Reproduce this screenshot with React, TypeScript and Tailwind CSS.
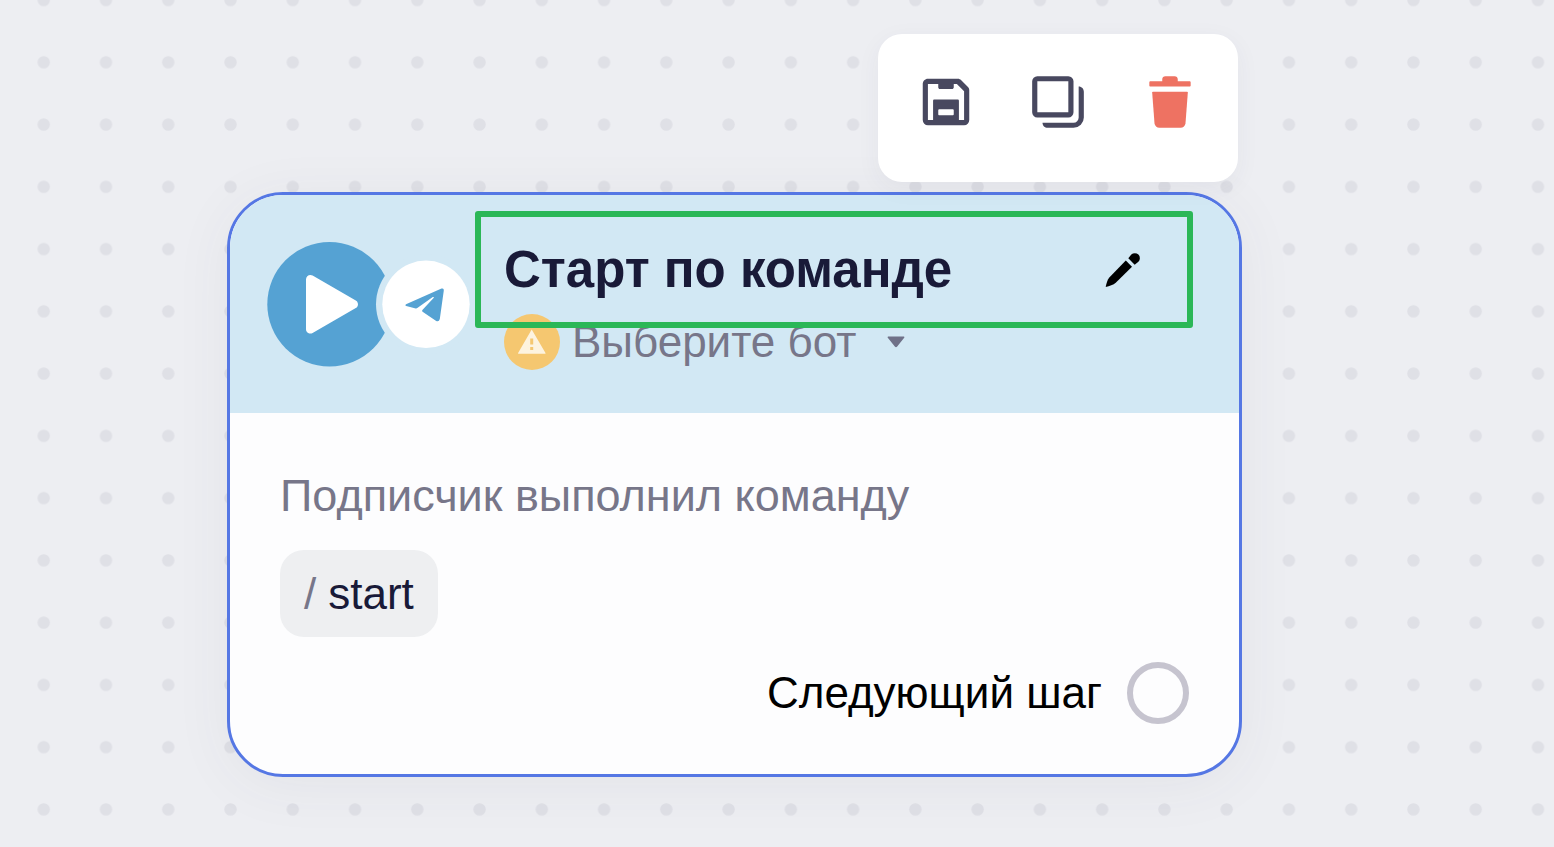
import React from "react";

function DotGrid() {
  return (
    <svg className="absolute inset-0 h-full w-full" aria-hidden="true">
      <defs>
        <pattern id="dots" x="12.6" y="-31.1" width="62.26" height="62.26" patternUnits="userSpaceOnUse">
          <circle cx="31.13" cy="31.13" r="6.2" fill="#dfe0e6" />
        </pattern>
      </defs>
      <rect width="100%" height="100%" fill="url(#dots)" />
    </svg>
  );
}

function SaveIcon() {
  return (
    <svg viewBox="0 0 24 24" className="size-full" fill="#48485f" aria-hidden="true">
      <path
        fillRule="evenodd"
        d="M5 3h11.6c.5 0 .9.2 1.3.6l2.5 2.5c.4.4.6.8.6 1.300V19a2 2 0 0 1-2 2H5a2 2 0 0 1-2-2V5c0-1.100.9-2 2-2zM5 5v14h2v-7.500c0-.3.200-.5.500-.5h9c.3 0 .5.200.5.500V19h2V7.800L16.200 5H15v1.300c0 .4-.300.700-.7.700H9.700c-.4 0-.7-.300-.7-.700V5zM9.400 14.800c-.200 0-.4.200-.4.400v1.500c0 .200.200.4.400.4h5.200c.200 0 .4-.200.4-.4v-1.500c0-.200-.200-.4-.4-.4z"
      />
    </svg>
  );
}

function CopyIcon() {
  return (
    <svg viewBox="0 0 24 24" className="size-full" fill="none" stroke="#48485f" strokeWidth="2" aria-hidden="true">
      <rect x="3" y="3" width="14" height="14" rx="1" />
      <path fill="#48485f" stroke="none" d="M20 6c1.200 0 2 .9 2 2v10a4 4 0 0 1-4 4H8c-1.100 0-2-.8-2-2h12a2 2 0 0 0 2-2z" />
    </svg>
  );
}

function TrashIcon() {
  return (
    <svg viewBox="0 0 24 24" className="size-full" fill="#ee7262" aria-hidden="true">
      <path d="M4.400 4H9v-.8C9 2.500 9.500 2 10.200 2h3.600c.7 0 1.200.5 1.200 1.200V4h4.600c.2 0 .4.200.4.400v1.200c0 .200-.2.400-.4.400H4.400c-.2 0-.4-.200-.4-.400V4.400c0-.200.2-.400.4-.400z" />
      <path d="M5.400 8h13.200c.2 0 .3.100.3.300L18 20.200c-.1 1-.9 1.800-1.900 1.800H7.900c-1 0-1.800-.8-1.900-1.800L5.100 8.300c0-.2.100-.3.300-.3z" />
    </svg>
  );
}

function StartIcon() {
  return (
    <svg viewBox="0 0 203 125" className="h-[125px] w-[203px] shrink-0" aria-hidden="true">
      <circle cx="62.500" cy="62.300" r="62.200" fill="#55a2d3" />
      <path d="M43.400 37.400L86.600 62.300L43.400 87.200Z" fill="#fff" stroke="#fff" strokeWidth="8.800" strokeLinejoin="round" />
      <circle cx="159" cy="62.300" r="50" fill="#d2e8f4" />
      <circle cx="159" cy="62.300" r="43.700" fill="#fff" />
      <path
        d="M139 62.300L174.500 46.600Q177 45.800 176.800 48.400L172.800 77Q172 80.200 169.200 79L155.600 69.700Q154.600 68.800 155.400 67.900L166.800 55.700Q167.200 54.600 165.800 55L151 65.600Q149.600 66.800 147.800 66.300L139.200 64Q137.400 63.200 139 62.300Z"
        fill="#55a2d3"
      />
    </svg>
  );
}

function WarningIcon() {
  return (
    <svg viewBox="0 0 56 56" className="size-14 shrink-0" aria-hidden="true">
      <circle cx="28" cy="28" r="28" fill="#f5c770" />
      <path d="M27.700 15.500L41.500 39Q42 39.800 41 39.800H14.600Q13.600 39.800 14.100 39Z" fill="#fdf3df" />
      <path d="M26.200 24.500h3v6h-3zM26.200 33h3v3h-3z" fill="#f5c770" />
    </svg>
  );
}

function PencilIcon() {
  return (
    <svg viewBox="0 0 36 36" className="size-full" aria-hidden="true">
      <path d="M.7 34.900C1.300 31.500 2.300 28 4.300 25.400L20.800 8.600L27 14.700L11 30.500C8.200 33 4.600 34.200.700 34.900Z" />
      <path d="M23.300 6.300L26.300 2.600A5 5 0 0 1 33.400 9.700L29.700 12.700Z" />
    </svg>
  );
}

const tools = [
  { label: "Сохранить", Icon: SaveIcon },
  { label: "Дублировать", Icon: CopyIcon },
  { label: "Удалить", Icon: TrashIcon },
];

function Toolbar() {
  return (
    <div
      role="toolbar"
      className="absolute right-px bottom-full mb-[13px] flex gap-[50px] rounded-3xl bg-white px-[37px] pt-[37px] pb-[49px] shadow-[0_6px_24px_rgba(60,60,90,0.05)]"
    >
      {tools.map(({ label, Icon }) => (
        <button key={label} type="button" aria-label={label} className="size-[62px]">
          <Icon />
        </button>
      ))}
    </div>
  );
}

function NodeHeader() {
  return (
    <header className="flex gap-[34px] rounded-t-[53px] bg-[#d2e8f4] pt-[47px] pr-[98px] pb-[43px] pl-[37px]">
      <StartIcon />
      <div className="flex min-w-0 grow flex-col gap-4">
        <div className="relative flex h-14 items-center justify-between">
          <h1 className="text-[51px] leading-14 font-bold whitespace-nowrap text-[#191a38]">Старт по команде</h1>
          <button type="button" aria-label="Переименовать" className="size-9">
            <PencilIcon />
          </button>
          <div className="pointer-events-none absolute -top-[31px] -right-[52px] -bottom-[30px] -left-[29px] z-10 rounded-[3px] border-6 border-[#2bb757]" />
        </div>
        <div className="flex items-center gap-3">
          <WarningIcon />
          <div className="flex items-center gap-[30px]">
            <select
              aria-label="Бот"
              className="h-14 appearance-none bg-transparent text-[44px] leading-14 text-[#777689] outline-none"
            >
              <option>Выберите бот</option>
            </select>
            <svg viewBox="0 0 18 12" className="h-3 w-[18px]" fill="#6f7188" aria-hidden="true">
              <path d="M1.200.6H16.800Q18 .8 17.200 1.800L10.200 10.600Q9 11.800 7.800 10.600L.8 1.800Q0 .8 1.200.6Z" />
            </svg>
          </div>
        </div>
      </div>
    </header>
  );
}

function NodeBody() {
  return (
    <div className="flex flex-col items-start px-[50px] pt-[57px] pb-[50px] text-[44px] leading-[52px]">
      <p className="text-[45px] text-[#777689]">Подписчик выполнил команду</p>
      <div className="mt-7 flex h-[87px] items-center gap-3 rounded-3xl bg-[#eeeff1] px-6 text-[#191a38]">
        <span className="text-[#777689]">/</span>
        <span>start</span>
      </div>
      <div className="mt-[25px] flex items-center gap-[25px] self-end">
        <span id="next-step">Следующий шаг</span>
        <button
          type="button"
          aria-labelledby="next-step"
          className="size-[62px] rounded-full border-6 border-[#c6c4cf]"
        />
      </div>
    </div>
  );
}

export default function App() {
  return (
    <main className="relative min-h-screen overflow-hidden bg-[#edeef2] font-['Liberation_Sans',Arial,sans-serif] text-black">
      <DotGrid />
      <article className="absolute top-48 left-[227px] w-[1015px] rounded-[56px] border-3 border-[#5577e4] bg-[#fdfdfe] shadow-[0_8px_60px_rgba(60,60,90,0.06)]">
        <Toolbar />
        <NodeHeader />
        <NodeBody />
      </article>
    </main>
  );
}
